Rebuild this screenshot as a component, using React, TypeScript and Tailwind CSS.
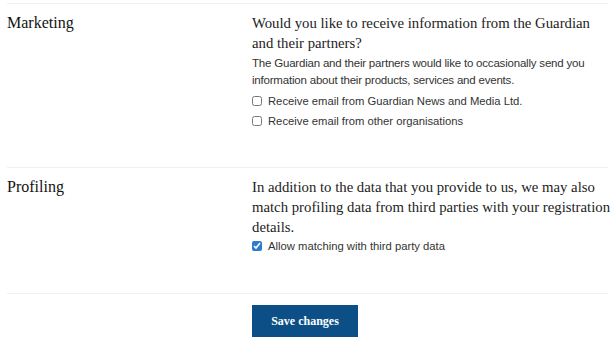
import { useState } from 'react';

const serif = "font-['Liberation_Serif','DejaVu_Serif',serif]";
const sans = "font-['Liberation_Sans','Open_Sans',sans-serif]";

function Check({ label, defaultChecked = false }: { label: string; defaultChecked?: boolean }) {
  const [checked, setChecked] = useState(defaultChecked);
  return (
    <label className={`flex h-5 items-center gap-[6px] text-[11.25px] text-[#333] ${sans}`}>
      <input
        type="checkbox"
        checked={checked}
        onChange={(e) => setChecked(e.target.checked)}
        className="m-0 h-[10px] w-[10px] accent-[#2c7bd0]"
      />
      <span>{label}</span>
    </label>
  );
}

function Section({ title, children }: { title: string; children: React.ReactNode }) {
  return (
    <section className="grid grid-cols-[245px_1fr] border-t border-[#f0f0f0] pt-[9px]">
      <h2 className={`text-[16px] leading-[20px] text-[#121212] ${serif}`}>{title}</h2>
      <div className="min-w-0">{children}</div>
    </section>
  );
}

export default function App() {
  return (
    <div className="min-h-[353px] bg-white px-[7px] pt-[3px]">
      <Section title="Marketing">
        <p className={`-mr-2 whitespace-nowrap text-[14.75px] leading-[20px] text-[#222] ${serif}`}>
          Would you like to receive information from the Guardian
          <br />
          and their partners?
        </p>
        <p
          className={`-mr-2 mt-[2px] whitespace-nowrap text-[11.5px] leading-[17px] tracking-[-0.2px] text-[#333] ${sans}`}
        >
          The Guardian and their partners would like to occasionally send you
          <br />
          information about their products, services and events.
        </p>
        <div className="mt-[2px] pb-9">
          <Check label="Receive email from Guardian News and Media Ltd." />
          <Check label="Receive email from other organisations" />
        </div>
      </Section>
      <Section title="Profiling">
        <p className={`-mr-2 whitespace-nowrap text-[14.75px] leading-[20px] text-[#222] ${serif}`}>
          In addition to the data that you provide to us, we may also
          <br />
          match profiling data from third parties with your registration
          <br />
          details.
        </p>
        <div className="-mt-px pb-[37px]">
          <Check label="Allow matching with third party data" defaultChecked />
        </div>
      </Section>
      <div className="grid grid-cols-[245px_1fr] border-t border-[#f0f0f0] pt-[11px]">
        <div />
        <div>
          <button className={`h-8 w-[106px] bg-[#0b4f86] text-[12px] font-bold text-white ${serif}`}>
            Save changes
          </button>
        </div>
      </div>
    </div>
  );
}
